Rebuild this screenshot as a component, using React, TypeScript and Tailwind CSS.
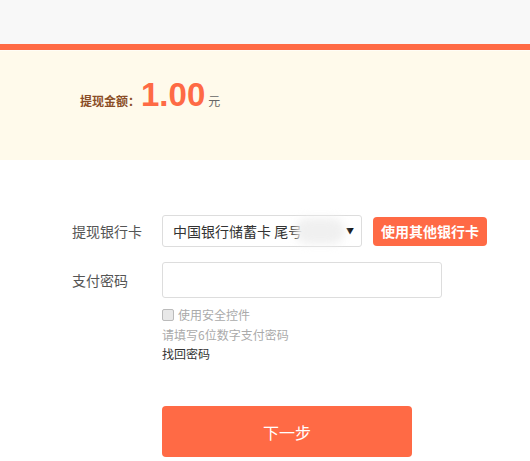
export default function App() {
  const font = { fontFamily: '"Microsoft YaHei", "Noto Sans CJK SC", "Liberation Sans", sans-serif' }
  return (
    <div className="w-[530px] h-[461px] overflow-hidden bg-white" style={font}>
      {/* top strip */}
      <div className="h-[44px] bg-[#f8f8f8]" />
      <div className="h-[6px] bg-[#ff6a45]" />
      <div className="h-[1px] bg-[#fffdf6]" />

      {/* amount */}
      <div className="h-[109px] bg-[#fffaeb] pl-[80px] pt-[27px]">
        <div className="flex items-baseline">
          <span className="text-[12px] font-bold text-[#8a4d26]">提现金额：</span>
          <span className="text-[33px] font-bold leading-none text-[#fe6a45] font-['Liberation_Sans',sans-serif] ml-[1px]">1.00</span>
          <span className="text-[12px] text-[#666] ml-[3px]">元</span>
        </div>
      </div>

      {/* form */}
      <div className="pt-[55px] pl-[72px]">
        <div className="flex items-center">
          <span className="w-[90px] text-[14px] text-[#555]">提现银行卡</span>
          <div className="relative flex items-center w-[200px] h-[32px] border border-[#ddd] rounded-[3px] pl-[10px] pr-[7px]">
            <span className="text-[14px] text-[#333] whitespace-nowrap">中国银行储蓄卡 尾号</span>
            <span className="absolute left-[132px] top-[2px] w-[50px] h-[26px] rounded-full bg-[#f0f0f0] blur-[4px]" />
            <span className="ml-auto text-[8px] text-[#111]">▼</span>
          </div>
          <button className="ml-[11px] h-[29px] px-[8px] rounded-[4px] bg-[#ff6a45] text-white text-[14px] font-bold">
            使用其他银行卡
          </button>
        </div>

        <div className="flex items-center mt-[15px]">
          <span className="w-[90px] text-[14px] text-[#555]">支付密码</span>
          <div className="w-[280px] h-[36px] border border-[#ddd] rounded-[3px]" />
        </div>

        <div className="ml-[90px] mt-[8px] flex items-center gap-[4px]">
          <span className="w-[12px] h-[12px] border border-[#bbb] rounded-[2px] bg-[#e8e8e8]" />
          <span className="text-[12px] text-[#aaa]">使用安全控件</span>
        </div>
        <div className="ml-[90px] mt-[2px] text-[12px] text-[#aaa]">请填写6位数字支付密码</div>
        <div className="ml-[90px] mt-[1px] text-[12px] text-[#333]">找回密码</div>

        <button className="ml-[90px] mt-[43px] w-[250px] h-[51px] rounded-[4px] bg-[#ff6a45] text-white text-[16px]">
          下一步
        </button>
      </div>
    </div>
  )
}
